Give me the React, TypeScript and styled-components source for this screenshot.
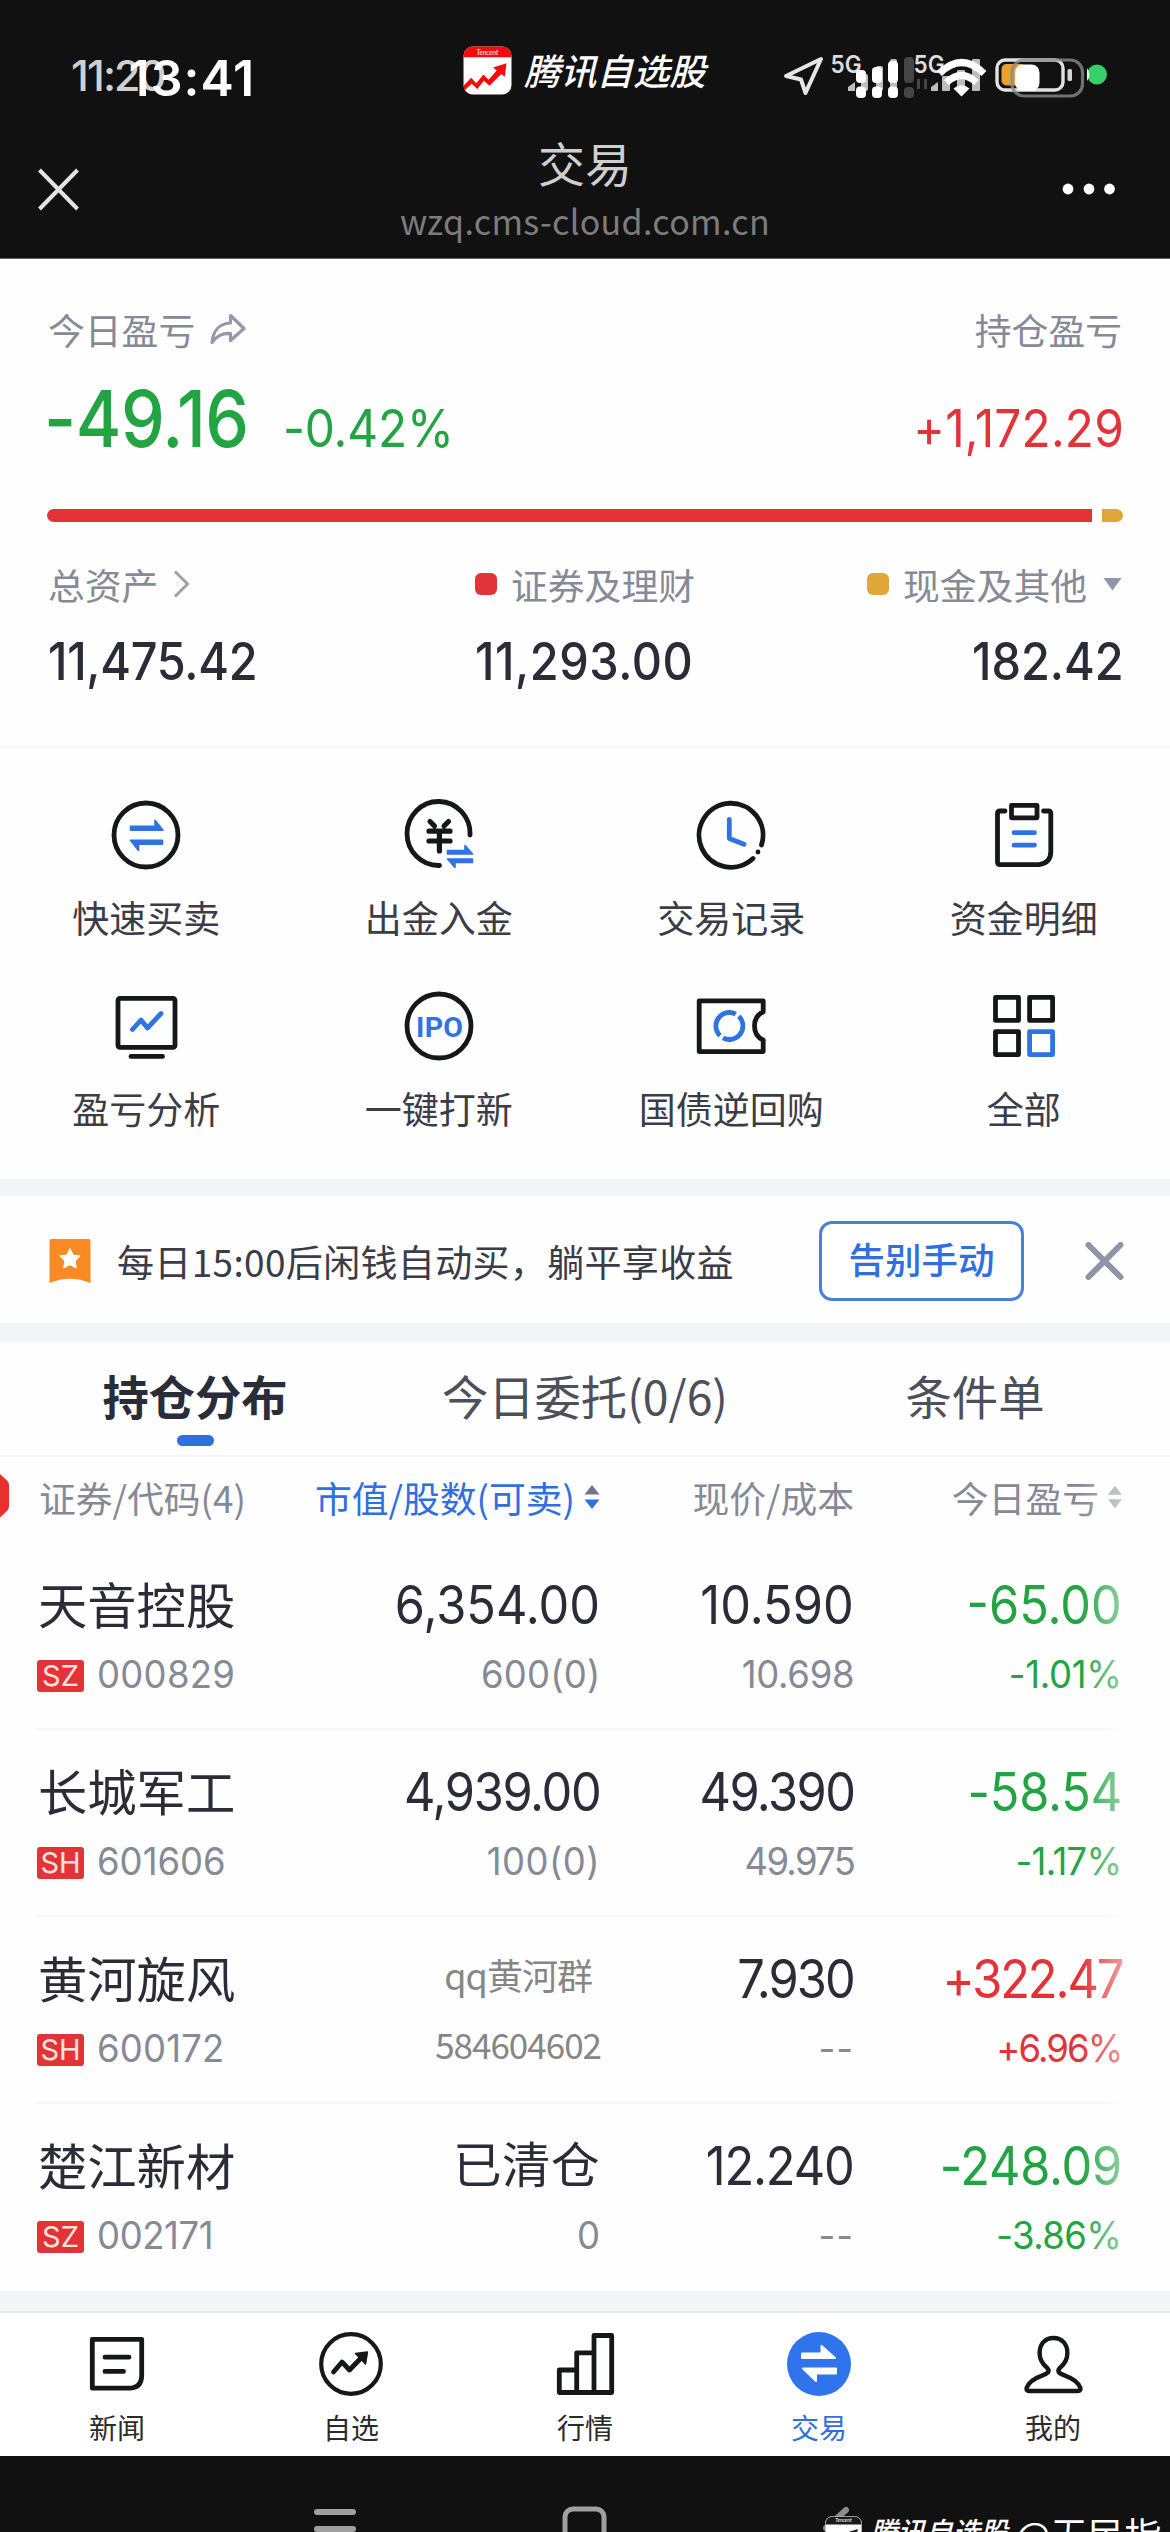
import * as React from "react";
import styled, { createGlobalStyle } from "styled-components";

const CJK = `"Noto Sans CJK SC", sans-serif`;
const NUM = `Inter, "Noto Sans CJK SC", sans-serif`;

const colors = {
  black: "#111111",
  ink: "#2a2c38",
  text: "#3b3c47",
  muted: "#868a96",
  blue: "#2f6fe0",
  red: "#e23438",
  green: "#23a443",
  gold: "#e0a63a",
  strip: "#f4f5f8",
};

type Tone = "up" | "down" | "ink" | "muted";

const toneColor: Record<Tone, string> = {
  up: colors.red,
  down: colors.green,
  ink: colors.ink,
  muted: colors.muted,
};

interface Figure {
  value: string;
  track: number;
  size?: number;
  squeeze?: number;
}

interface Holding {
  name: string;
  market: "SZ" | "SH";
  code: Figure;
  amount?: Figure;
  shares?: Figure;
  price: Figure;
  cost: Figure;
  profit: Figure;
  rate: Figure;
  tone: Tone;
}

const holdings: Holding[] = [
  {
    name: "天音控股",
    market: "SZ",
    code: { value: "000829", track: 0.3 },
    amount: { value: "6,354.00", track: 0 },
    shares: { value: "600(0)", track: 0.2 },
    price: { value: "10.590", track: 0 },
    cost: { value: "10.698", track: -0.3 },
    profit: { value: "-65.00", track: 0 },
    rate: { value: "-1.01%", track: -0.3 },
    tone: "down",
  },
  {
    name: "长城军工",
    market: "SH",
    code: { value: "601606", track: 0 },
    amount: { value: "4,939.00", track: -1.5 },
    shares: { value: "100(0)", track: 0.5 },
    price: { value: "49.390", track: -1.7 },
    cost: { value: "49.975", track: -1.8 },
    profit: { value: "-58.54", track: -0.2 },
    rate: { value: "-1.17%", track: -0.7 },
    tone: "down",
  },
  {
    name: "黄河旋风",
    market: "SH",
    code: { value: "600172", track: 0.2 },
    price: { value: "7.930", track: -2.1 },
    cost: { value: "--", track: 1 },
    profit: { value: "+322.47", track: -2.3 },
    rate: { value: "+6.96%", track: -2 },
    tone: "up",
  },
  {
    name: "楚江新材",
    market: "SZ",
    code: { value: "002171", track: -0.4 },
    amount: { value: "已清仓", track: 0.5, size: 48.5, squeeze: 1 },
    shares: { value: "0", track: 0 },
    price: { value: "12.240", track: -1.3 },
    cost: { value: "--", track: 1 },
    profit: { value: "-248.09", track: -0.3 },
    rate: { value: "-3.86%", track: -0.6 },
    tone: "down",
  },
];

const GlobalStyle = createGlobalStyle`
  * {
    box-sizing: border-box;
  }

  body {
    margin: 0;
    background: #fff;
    font-family: ${CJK};
  }
`;

const Screen = styled.div`
  width: 1170px;
  height: 2532px;
  overflow: hidden;
  display: flex;
  flex-direction: column;
  background: #fefefe;
`;

/* ---------- header ---------- */

const Header = styled.header`
  height: 259px;
  flex: none;
  background: ${colors.black};
  border-bottom: 1px solid #6a6a6a;
`;

const StatusBar = styled.div`
  display: grid;
  grid-template-columns: 391px 389px 1fr;
  align-items: center;
  height: 120px;
  padding-top: 30px;
`;

const Clocks = styled.div`
  display: flex;
  align-items: center;
  padding-left: 71px;
  font-family: ${NUM};
`;

const OldClock = styled.span`
  font-size: 43px;
  line-height: 50px;
  font-weight: 500;
  letter-spacing: -1.9px;
  color: #d0d0d0;
`;

const Clock = styled.span`
  margin-left: -36px;
  padding-top: 5px;
  font-size: 50px;
  line-height: 50px;
  font-weight: 600;
  letter-spacing: 1px;
  color: #fff;
`;

const Brand = styled.div`
  display: flex;
  align-items: center;
  gap: 12px;
  padding: 0 0 10px 72px;
`;

const BrandName = styled.span<{ size: number }>`
  font-size: ${(p) => p.size}px;
  line-height: 1.2;
  font-weight: 500;
  font-style: italic;
  white-space: nowrap;
  color: #fff;
`;

const NavBar = styled.div`
  display: grid;
  grid-template-columns: 120px 1fr 120px;
  align-items: center;
  height: 138px;
`;

const NavSide = styled.div<{ end?: boolean }>`
  display: flex;
  justify-content: ${(p) => (p.end ? "flex-end" : "flex-start")};
  padding: ${(p) => (p.end ? "0 54px 0 0" : "0 0 0 37px")};
`;

const NavTitle = styled.div`
  align-self: start;
  display: flex;
  flex-direction: column;
  align-items: center;
  gap: 11px;
  padding-top: 14px;
`;

const Title = styled.h1`
  margin: 0;
  font-size: 47px;
  line-height: 56px;
  font-weight: 400;
  color: #cfcfcf;
`;

const Url = styled.span`
  font-size: 34px;
  line-height: 40px;
  letter-spacing: 0.33px;
  color: #7c7c7c;
`;

/* ---------- summary ---------- */

const Summary = styled.section`
  height: 489px;
  flex: none;
  padding: 45px 48px 0;
  border-bottom: 2px solid #f5f5f6;
`;

const Line = styled.div`
  display: flex;
  justify-content: space-between;
  align-items: baseline;
`;

const Label = styled.div`
  display: flex;
  align-items: center;
  font-size: 36.8px;
  line-height: 50px;
  color: ${colors.muted};
  white-space: nowrap;
`;

const BigLine = styled(Line)`
  height: 80px;
  margin-top: 24px;
`;

/* digits are drawn slightly condensed, anchored on the side they align to */
const Num = styled.span<{
  size: number;
  track: number;
  tone: Tone;
  squeeze: number;
  end?: boolean;
  weight?: number;
  height?: number;
}>`
  display: block;
  margin-right: ${(p) => (p.end ? "-2px" : "0")};
  font-family: ${NUM};
  font-size: ${(p) => p.size}px;
  line-height: ${(p) => p.height ?? 60}px;
  font-weight: ${(p) => p.weight ?? 400};
  letter-spacing: ${(p) => p.track}px;
  color: ${(p) => toneColor[p.tone]};
  white-space: nowrap;
  transform: scaleX(${(p) => p.squeeze});
  transform-origin: ${(p) => (p.end ? "right" : "left")} center;
`;

const DayProfit = styled.div`
  display: flex;
  align-items: baseline;
  gap: 6px;
  margin-left: -4px;
`;

const Bar = styled.div`
  display: flex;
  gap: 10px;
  height: 13px;
  margin: 51px -1px 0 -1px;
`;

const BarPart = styled.div<{ color: string; side: "left" | "right" }>`
  background: ${(p) => p.color};
  border-radius: ${(p) => (p.side === "left" ? "7px 0 0 7px" : "0 7px 7px 0")};
`;

const Assets = styled.div`
  display: grid;
  grid-template-columns: 427px 1fr auto;
  margin-top: 37px;
`;

const Asset = styled.div<{ end?: boolean }>`
  display: flex;
  flex-direction: column;
  gap: 22px;
  align-items: ${(p) => (p.end ? "flex-end" : "flex-start")};
`;

const Dot = styled.i<{ color: string }>`
  width: 22px;
  height: 22px;
  margin-right: 14px;
  border-radius: 6px;
  background: ${(p) => p.color};
`;

const Gap = styled.i<{ w: number }>`
  width: ${(p) => p.w}px;
`;

/* ---------- actions ---------- */

const Actions = styled.section`
  display: grid;
  grid-template-columns: repeat(4, 1fr);
  row-gap: 49px;
  align-content: start;
  height: 431px;
  flex: none;
  padding-top: 51px;
`;

const Action = styled.div`
  display: flex;
  flex-direction: column;
  align-items: center;
  gap: 22px;
`;

const ActionLabel = styled.span`
  font-size: 37px;
  line-height: 48px;
  color: ${colors.text};
`;

const Strip = styled.div<{ h: number; line?: boolean }>`
  height: ${(p) => p.h}px;
  flex: none;
  background: ${colors.strip};
  border-bottom: ${(p) => (p.line ? "2px solid #e9e9ed" : "none")};
`;

/* ---------- promo ---------- */

const Promo = styled.section`
  display: flex;
  align-items: center;
  height: 127px;
  flex: none;
  padding: 2px 46px 0 49px;
`;

const PromoText = styled.p`
  flex: 1;
  margin: 0 0 0 26px;
  font-size: 37px;
  line-height: 48px;
  letter-spacing: 0.34px;
  color: ${colors.text};
  white-space: nowrap;
`;

const PromoButton = styled.button`
  width: 205px;
  height: 80px;
  margin-right: 61px;
  padding: 0 0 4px;
  border: 3px solid #4a80dc;
  border-radius: 13px;
  background: #fff;
  font-family: ${CJK};
  font-size: 36.5px;
  font-weight: 500;
  color: ${colors.blue};
`;

/* ---------- tabs ---------- */

const Tabs = styled.nav`
  display: grid;
  grid-template-columns: repeat(3, 1fr);
  height: 115px;
  flex: none;
  padding-top: 23px;
  border-bottom: 2px solid #f5f5f6;
`;

const Tab = styled.div<{ active?: boolean }>`
  display: flex;
  flex-direction: column;
  align-items: center;
  gap: 10px;
  font-size: 46.3px;
  line-height: 60px;
  font-weight: ${(p) => (p.active ? 700 : 400)};
  color: ${(p) => (p.active ? colors.ink : "#4d505b")};

  &::after {
    content: "";
    width: 37px;
    height: 11px;
    border-radius: 6px;
    background: ${(p) => (p.active ? colors.blue : "transparent")};
  }
`;

/* ---------- holdings ---------- */

const Table = styled.section`
  position: relative;
  flex: none;

  &::after {
    content: "";
    position: absolute;
    top: 0;
    right: 0;
    bottom: 0;
    width: 90px;
    background: linear-gradient(to right, rgba(254, 254, 254, 0), #fefefe 95%);
  }
`;

const SideTag = styled.svg`
  position: absolute;
  left: 0;
  top: 17px;
`;

const columns = "250px 311px 254px 268px";

const TableHead = styled.div`
  display: grid;
  grid-template-columns: ${columns};
  align-items: center;
  height: 86px;
  padding: 0 48px 7px 39px;
`;

const HeadCell = styled.div<{ end?: boolean; active?: boolean }>`
  display: flex;
  align-items: center;
  justify-content: ${(p) => (p.end ? "flex-end" : "flex-start")};
  gap: 9px;
  font-size: 36.8px;
  line-height: 48px;
  color: ${(p) => (p.active ? colors.blue : colors.muted)};
  white-space: nowrap;
`;

const Row = styled.div`
  display: grid;
  grid-template-columns: ${columns};
  height: 187px;
  margin: 0 48px 0 35px;
  padding: 32px 0 0 2px;
  border-bottom: 2px solid #f6f6f8;

  &:last-child {
    border-bottom: 0;
  }
`;

const Cell = styled.div<{ end?: boolean }>`
  display: flex;
  flex-direction: column;
  gap: 19px;
  align-items: ${(p) => (p.end ? "flex-end" : "flex-start")};
`;

const StockName = styled.span`
  margin: -2px 0 2px 1px;
  font-size: 49.3px;
  line-height: 60px;
  color: ${colors.ink};
`;

const CodeLine = styled.div`
  display: flex;
  align-items: center;
  gap: 13px;
`;

const Market = styled.span`
  width: 47px;
  height: 32px;
  margin-top: 3px;
  border-radius: 3px;
  background: ${colors.red};
  font: 400 29px/32px Inter, sans-serif;
  text-align: center;
  color: #ffe3dc;
`;

const Note = styled.div`
  display: flex;
  flex-direction: column;
  align-items: center;
  align-self: start;
  gap: 20px;
  justify-self: end;
  margin: -5px -3px 0 0;
  font-size: 36px;
  line-height: 60px;
  letter-spacing: -1px;
  color: #868686;

  span:last-child {
    font-size: 35px;
    line-height: 40px;
  }
`;

/* ---------- bottom ---------- */

const TabBar = styled.nav`
  display: grid;
  grid-template-columns: repeat(5, 1fr);
  height: 143px;
  flex: none;
  padding-top: 18px;
  background: #fff;
`;

const TabItem = styled.div<{ active?: boolean }>`
  display: flex;
  flex-direction: column;
  align-items: center;
  gap: 12px;
  font-size: 28px;
  line-height: 36px;
  color: ${(p) => (p.active ? colors.blue : "#2b2b2b")};
`;

const SystemBar = styled.footer`
  position: relative;
  height: 77px;
  flex: none;
  overflow: hidden;
  background: ${colors.black};
`;

const Watermark = styled.div`
  position: absolute;
  left: 825px;
  top: 60px;
  display: flex;
  align-items: flex-start;
  gap: 8px;
`;

const WatermarkText = styled.div`
  display: flex;
  align-items: flex-start;
  gap: 8px;
  margin-top: -2px;
`;

const Author = styled.span`
  font-size: 37px;
  line-height: 1.1;
  color: #fff;
`;

/* ---------- drawings ---------- */

const Stroke = ({ size, children }: { size: number; children: React.ReactNode }) => (
  <svg
    width={size}
    height={size}
    viewBox={`0 0 ${size} ${size}`}
    fill="none"
    stroke="#16171b"
    strokeWidth="4.8"
    strokeLinecap="round"
    strokeLinejoin="round"
  >
    {children}
  </svg>
);

const blueLine = "#2f73e0";

const QuickTradeIcon = () => (
  <Stroke size={72}>
    <circle cx="36" cy="36" r="32" />
    <g fill={blueLine} stroke={blueLine} strokeWidth="1.6">
      <path d="M20.5 27.2H45V21.2L53 31.2H20.5Z" />
      <path d="M52.5 41.2H20.5L28.5 51.4V45.2H52.5Z" />
    </g>
  </Stroke>
);

const TransferIcon = () => (
  <Stroke size={72}>
    <path d="M67 36A31.5 32 0 1 0 36.5 66.5" />
    <path d="M27 22.5L31.5 27M45.5 22.5L41 27M26 32.2H47M26 42H47M36.4 32V52" strokeWidth="5.2" />
    <g fill={blueLine} stroke={blueLine} strokeWidth="1.6">
      <path d="M44.5 51.5H62V46.5L69.5 55H44.5Z" />
      <path d="M69.5 60H44.5L52 68.5V63.5H69.5Z" />
    </g>
  </Stroke>
);

const HistoryIcon = () => (
  <Stroke size={72}>
    <path d="M66.5 46A32 32 0 1 0 58 59.5" />
    <circle cx="63" cy="53" r="2.4" fill="#16171b" stroke="none" />
    <path d="M34.3 20.5V39.5L49 45.3" stroke={blueLine} />
  </Stroke>
);

const FundsIcon = () => (
  <Stroke size={72}>
    <rect x="23.5" y="6.3" width="25.5" height="12.5" />
    <path d="M17 12H12Q9.5 12 9.5 14.5V63Q9.5 65.6 12 65.6H51Q62.8 64 62.8 52.5V14.5Q62.8 12 60.3 12H55.5" />
    <path d="M26 33.7H46.5M26 46.2H46.5" stroke={blueLine} />
  </Stroke>
);

const AnalysisIcon = () => (
  <Stroke size={72}>
    <rect x="8" y="8.4" width="57" height="49" rx="2" />
    <path d="M21 66.4H52.5" />
    <path d="M22.5 39.5L31 30L37.5 38L51 23.5" stroke={blueLine} />
  </Stroke>
);

const IpoIcon = () => (
  <Stroke size={72}>
    <circle cx="36" cy="36" r="32" />
    <text
      x="13"
      y="46.5"
      textLength="47"
      fontFamily="Roboto, sans-serif"
      fontSize="28.5"
      fontWeight="700"
      fill={blueLine}
      stroke="none"
    >
      IPO
    </text>
  </Stroke>
);

const RepoIcon = () => (
  <Stroke size={72}>
    <path d="M68.2 22V10.8H4.2V61.6H68.2V50C62.5 47.5 59.5 42.5 59.5 36C59.5 29.5 62.5 24.5 68.2 22Z" />
    <circle
      cx="34.4"
      cy="36"
      r="13.5"
      stroke={blueLine}
      strokeLinecap="butt"
      pathLength="100"
      strokeDasharray="45.5 4.5"
      transform="rotate(-46 34.4 36)"
    />
  </Stroke>
);

const AllIcon = () => (
  <Stroke size={72}>
    <rect x="7.5" y="7.4" width="23" height="23" />
    <rect x="41.6" y="7.4" width="23" height="23" />
    <rect x="7.5" y="41.6" width="23" height="23" />
    <rect x="41.6" y="41.6" width="23" height="23" stroke={blueLine} />
  </Stroke>
);

const NewsIcon = () => (
  <Stroke size={66}>
    <path d="M8.3 8.3H57.7V44Q57.7 57.2 45 57.2H8.3Z" />
    <path d="M21 26.2H45M21 40.4H39.5" />
  </Stroke>
);

const WatchIcon = () => (
  <Stroke size={66}>
    <circle cx="33" cy="33" r="29.8" strokeWidth="4.2" />
    <path d="M15.5 41L24 31L31.5 39L44 26" />
    <path d="M37.5 22.5L49.5 21L47.5 33Z" fill="#16171b" strokeWidth="1.5" />
  </Stroke>
);

const MarketIcon = () => (
  <Stroke size={66}>
    <path d="M7.3 61.5V39H24.5M24.7 61.5V21.8H42M42 61.5V4.5H59.7V61.5H7.3" />
  </Stroke>
);

const TradeIcon = () => (
  <Stroke size={66}>
    <circle cx="33" cy="33" r="32" fill="#2f74ea" stroke="none" />
    <g fill="#fff" stroke="#fff" strokeWidth="2">
      <path d="M16 22.5H35.5V15L49 27H16Z" />
      <path d="M50 37.5H17L30 50V42.5H50Z" />
    </g>
  </Stroke>
);

const MineIcon = () => (
  <Stroke size={66}>
    <path
      strokeWidth="4.4"
      d="M33.5 7C25 7 19.6 13 19.6 22C19.6 29 23 33.5 27.2 37C30.5 41 27.5 42.6 22 44.6C12.5 48 8 53 6.6 57Q6 60 9 60H58Q61 60 60.4 57C59 53 54.5 48 45 44.6C39.5 42.6 36.5 41 39.8 37C44 33.5 47.4 29 47.4 22C47.4 13 42 7 33.5 7Z"
    />
  </Stroke>
);

const Logo = ({ size, mono }: { size: number; mono?: boolean }) => (
  <svg width={size} height={size} viewBox="0 0 48 48">
    <rect x="0.5" y="0.5" width="47" height="47" rx="9" fill="#fff" />
    <path d="M0.5 11V9.5A9 9 0 0 1 9.5 0.5H38.5A9 9 0 0 1 47.5 9.5V11Z" fill={mono ? "#1a1a1a" : "#f40a0a"} />
    {mono && <rect x="0.5" y="0.5" width="47" height="47" rx="9" fill="none" stroke="#bbb" />}
    <text
      x="24"
      y="8.4"
      textAnchor="middle"
      fontFamily="Lato, sans-serif"
      fontSize="6.6"
      fontStyle="italic"
      fill="#fff"
    >
      Tencent
    </text>
    <path
      d="M0.5 39L8 31L13 36.5L20 28L25 33L33 24L29.5 21L42.5 17L41 30L37.5 27.5L26 39L20.5 34L14 42L8.5 37L1.5 43.5Z"
      fill={mono ? "#222" : "#f40a0a"}
    />
  </svg>
);

const StatusIcons = () => (
  <svg width="330" height="60" viewBox="780 45 330 60">
    <path
      d="M786 76L821 59L805.5 93L801 79.5Z"
      fill="none"
      stroke="#e6e6e6"
      strokeWidth="4"
      strokeLinejoin="round"
    />
    <g fill="#dcdcdc" fontFamily="Inter, sans-serif" fontSize="24" fontWeight="600">
      <text x="830.5" y="73" textLength="31" lengthAdjust="spacingAndGlyphs">
        5G
      </text>
      <text x="913.5" y="73" textLength="31" lengthAdjust="spacingAndGlyphs">
        5G
      </text>
    </g>
    <g fill="#bdbdbd">
      <path d="M848 91V87L855 82V91Z" />
      <rect x="861" y="74" width="7" height="17" rx="2" />
      <rect x="876" y="66" width="7" height="25" rx="2" />
      <rect x="890" y="59" width="7" height="32" rx="2" />
      <path d="M931 91V87L938 82V91Z" />
      <rect x="942" y="76" width="8" height="15" rx="1" />
      <rect x="957" y="70" width="8" height="21" rx="1" />
      <rect x="972" y="59" width="8" height="32" rx="1" />
    </g>
    <g fill="#454545">
      <rect x="904" y="57" width="10" height="26" rx="4" />
      <rect x="904" y="87" width="10" height="11" rx="4" />
      <rect x="917" y="79" width="3" height="10" />
      <rect x="924" y="79" width="3" height="10" />
    </g>
    <g fill="#fff">
      <rect x="856" y="70" width="10" height="13" rx="4" />
      <rect x="872" y="67" width="10" height="16" rx="4" />
      <rect x="888" y="61" width="10" height="22" rx="4" />
      <rect x="856" y="86.5" width="10" height="11.5" rx="4" />
      <rect x="872" y="86.5" width="10" height="11.5" rx="4" />
      <rect x="888" y="86.5" width="10" height="11.5" rx="4" />
    </g>
    <g fill="none" stroke="#fff" strokeWidth="7">
      <path d="M939.5 73.5Q961.5 51.5 984 73.5" />
      <path d="M946.5 82.5Q961.5 68.5 976.5 82.5" />
    </g>
    <path d="M953.5 88.5Q961.5 82 969.5 88.5L961.5 96.5Z" fill="#fff" />
    <rect x="1001.5" y="64" width="24" height="21.5" rx="5" fill="#eaa22e" />
    <rect x="997" y="60" width="66" height="30" rx="8" fill="none" stroke="#e2e2e2" strokeWidth="3.4" />
    <rect
      x="1012"
      y="60"
      width="70.5"
      height="36"
      rx="12"
      fill="none"
      stroke="#8a8a8a"
      strokeOpacity=".8"
      strokeWidth="3.2"
    />
    <rect x="1015" y="64.5" width="24.5" height="26.5" rx="8" fill="#fff" />
    <rect x="1067.5" y="69" width="4.5" height="12" rx="1.5" fill="#d4d4d4" />
    <circle cx="1097" cy="74.5" r="10" fill="#35d066" />
    <path d="M1087 68Q1092 74.5 1087 81Z" fill="#d9ffe4" />
  </svg>
);

const SortIcon = ({ active }: { active?: boolean }) => (
  <svg width={active ? 16 : 14} height="24" viewBox="0 0 15 24">
    <path d="M7.5 0L15 9.5H0Z" fill={active ? "#6e7590" : "#92959f"} />
    <path d="M7.5 24L15 14.5H0Z" fill={active ? colors.blue : "#92959f"} />
  </svg>
);

/* ---------- data for menus ---------- */

const actions: [string, () => React.JSX.Element][] = [
  ["快速买卖", QuickTradeIcon],
  ["出金入金", TransferIcon],
  ["交易记录", HistoryIcon],
  ["资金明细", FundsIcon],
  ["盈亏分析", AnalysisIcon],
  ["一键打新", IpoIcon],
  ["国债逆回购", RepoIcon],
  ["全部", AllIcon],
];

const tabItems: [string, () => React.JSX.Element][] = [
  ["新闻", NewsIcon],
  ["自选", WatchIcon],
  ["行情", MarketIcon],
  ["交易", TradeIcon],
  ["我的", MineIcon],
];

const securities = 11293.0;
const cash = 182.42;

const MainNum = ({ figure, tone }: { figure: Figure; tone: Tone }) => (
  <Num size={figure.size ?? 53} squeeze={figure.squeeze ?? 0.92} track={figure.track} tone={tone} end>
    {figure.value}
  </Num>
);

const SubNum = ({ figure, tone, start }: { figure: Figure; tone: Tone; start?: boolean }) => (
  <Num size={38} height={40} squeeze={0.96} track={figure.track} tone={tone} end={!start}>
    {figure.value}
  </Num>
);

const HoldingRow = ({ item }: { item: Holding }) => (
  <Row>
    <Cell>
      <StockName>{item.name}</StockName>
      <CodeLine>
        <Market>{item.market}</Market>
        <SubNum figure={item.code} tone="muted" start />
      </CodeLine>
    </Cell>
    {item.amount && item.shares ? (
      <Cell end>
        <MainNum figure={item.amount} tone="ink" />
        <SubNum figure={item.shares} tone="muted" />
      </Cell>
    ) : (
      <Note>
        <span>qq黄河群</span>
        <span>584604602</span>
      </Note>
    )}
    <Cell end>
      <MainNum figure={item.price} tone="ink" />
      <SubNum figure={item.cost} tone="muted" />
    </Cell>
    <Cell end>
      <MainNum figure={item.profit} tone={item.tone} />
      <SubNum figure={item.rate} tone={item.tone} />
    </Cell>
  </Row>
);

const App = () => (
  <>
    <GlobalStyle />
    <Screen>
      <Header>
        <StatusBar>
          <Clocks>
            <OldClock>11:20</OldClock>
            <Clock>13:41</Clock>
          </Clocks>
          <Brand>
            <Logo size={49} />
            <BrandName size={36.3}>腾讯自选股</BrandName>
          </Brand>
          <StatusIcons />
        </StatusBar>
        <NavBar>
          <NavSide>
            <svg width="43" height="43" viewBox="0 0 43 43" stroke="#e4e4e4" strokeWidth="4">
              <path d="M2.5 2L40.5 41M40.5 2L2.5 41" />
            </svg>
          </NavSide>
          <NavTitle>
            <Title>交易</Title>
            <Url>wzq.cms-cloud.com.cn</Url>
          </NavTitle>
          <NavSide end>
            <svg width="54" height="14" viewBox="0 0 54 14" fill="#fff">
              <circle cx="6" cy="7" r="5.4" />
              <circle cx="27" cy="7" r="5.4" />
              <circle cx="47.5" cy="7" r="5.4" />
            </svg>
          </NavSide>
        </NavBar>
      </Header>

      <Summary>
        <Line>
          <Label>
            今日盈亏
            <Gap w={15} />
            <svg
              width="36"
              height="32"
              viewBox="0 0 36 32"
              fill="none"
              stroke="#9598a8"
              strokeWidth="3.2"
              strokeLinejoin="round"
            >
              <path d="M20.5 2.5L34 15.5L20.5 27.5V20.5C12 20 6.5 23 2 29.5C3 18.5 9 10.5 20.5 10Z" />
            </svg>
          </Label>
          <Label>持仓盈亏</Label>
        </Line>
        <BigLine>
          <DayProfit>
            <Num size={79} height={80} weight={550} squeeze={0.88} track={-0.5} tone="down">
              -49.16
            </Num>
            <Num size={52} squeeze={0.92} track={-0.2} tone="down">
              -0.42%
            </Num>
          </DayProfit>
          <Num size={52} squeeze={0.92} track={0.2} tone="up" end>
            +1,172.29
          </Num>
        </BigLine>
        <Bar>
          <BarPart color={colors.red} side="left" style={{ flexGrow: securities }} />
          <BarPart color={colors.gold} side="right" style={{ flexGrow: cash * 1.24 }} />
        </Bar>
        <Assets>
          <Asset>
            <Label>
              总资产
              <Gap w={15} />
              <svg width="17" height="28" viewBox="0 0 17 28" fill="none" stroke="#9ea1ac" strokeWidth="3">
                <path d="M2 1.5L14.5 14L2 26.5" />
              </svg>
            </Label>
            <Num size={51.5} weight={450} squeeze={0.91} track={-0.3} tone="ink">
              11,475.42
            </Num>
          </Asset>
          <Asset>
            <Label>
              <Dot color={colors.red} />
              证券及理财
            </Label>
            <Num size={51.5} weight={450} squeeze={0.91} track={0.6} tone="ink">
              11,293.00
            </Num>
          </Asset>
          <Asset end>
            <Label>
              <Dot color={colors.gold} />
              现金及其他
              <Gap w={16} />
              <svg width="19" height="14" viewBox="0 0 19 14" fill="#8f95ab">
                <path d="M0.5 1H18.5L9.5 13.5Z" />
              </svg>
            </Label>
            <Num size={51.5} weight={450} squeeze={0.91} track={0} tone="ink" end>
              182.42
            </Num>
          </Asset>
        </Assets>
      </Summary>

      <Actions>
        {actions.map(([label, Icon]) => (
          <Action key={label}>
            <Icon />
            <ActionLabel>{label}</ActionLabel>
          </Action>
        ))}
      </Actions>

      <Strip h={17} />
      <Promo>
        <svg width="42" height="44" viewBox="0 0 42 44">
          <path d="M0.5 2Q0.5 0 2.5 0H39.5Q41.5 0 41.5 2V44Q21 35.5 0.5 44Z" fill="#fa8a24" />
          <path
            d="M21 9.5L24.2 16L31.2 17L26.1 22L27.3 29L21 25.7L14.7 29L15.9 22L10.8 17L17.8 16Z"
            fill="#fff"
            stroke="#fff"
            strokeLinejoin="round"
          />
        </svg>
        <PromoText>每日15:00后闲钱自动买，躺平享收益</PromoText>
        <PromoButton>告别手动</PromoButton>
        <svg width="39" height="38" viewBox="0 0 39 38" stroke="#8f94a6" strokeWidth="6" strokeLinecap="round">
          <path d="M3.5 3L35.5 35M35.5 3L3.5 35" />
        </svg>
      </Promo>
      <Strip h={19} />

      <Tabs>
        <Tab active>持仓分布</Tab>
        <Tab>今日委托(0/6)</Tab>
        <Tab>条件单</Tab>
      </Tabs>

      <Table>
        <SideTag width="10" height="44" viewBox="0 0 10 44" fill="#e8302e">
          <path d="M0 0L7 6.5Q9 8.5 9 11.5V32Q9 35 7 37L0 43.5Z" />
        </SideTag>
        <TableHead>
          <HeadCell>证券/代码(4)</HeadCell>
          <HeadCell end active>
            市值/股数(可卖)
            <SortIcon active />
          </HeadCell>
          <HeadCell end>现价/成本</HeadCell>
          <HeadCell end>
            今日盈亏
            <SortIcon />
          </HeadCell>
        </TableHead>
        {holdings.map((item) => (
          <HoldingRow key={item.name} item={item} />
        ))}
      </Table>

      <Strip h={22} line />
      <TabBar>
        {tabItems.map(([label, Icon]) => (
          <TabItem key={label} active={label === "交易"}>
            <Icon />
            {label}
          </TabItem>
        ))}
      </TabBar>

      <SystemBar>
        <svg
          width="1170"
          height="77"
          viewBox="0 2455 1170 77"
          fill="none"
          stroke="#a0a0a0"
          strokeWidth="6"
          strokeLinecap="round"
        >
          <path d="M317 2511H353M317 2528H353" />
          <rect x="565" y="2508" width="39" height="40" rx="8" strokeWidth="5" />
          <path d="M846 2509L826 2527" stroke="#8c8c8c" />
        </svg>
        <Watermark>
          <Logo size={37} mono />
          <WatermarkText>
            <BrandName size={27.5}>腾讯自选股</BrandName>
            <Author>@无民指</Author>
          </WatermarkText>
        </Watermark>
      </SystemBar>
    </Screen>
  </>
);

export default App;
